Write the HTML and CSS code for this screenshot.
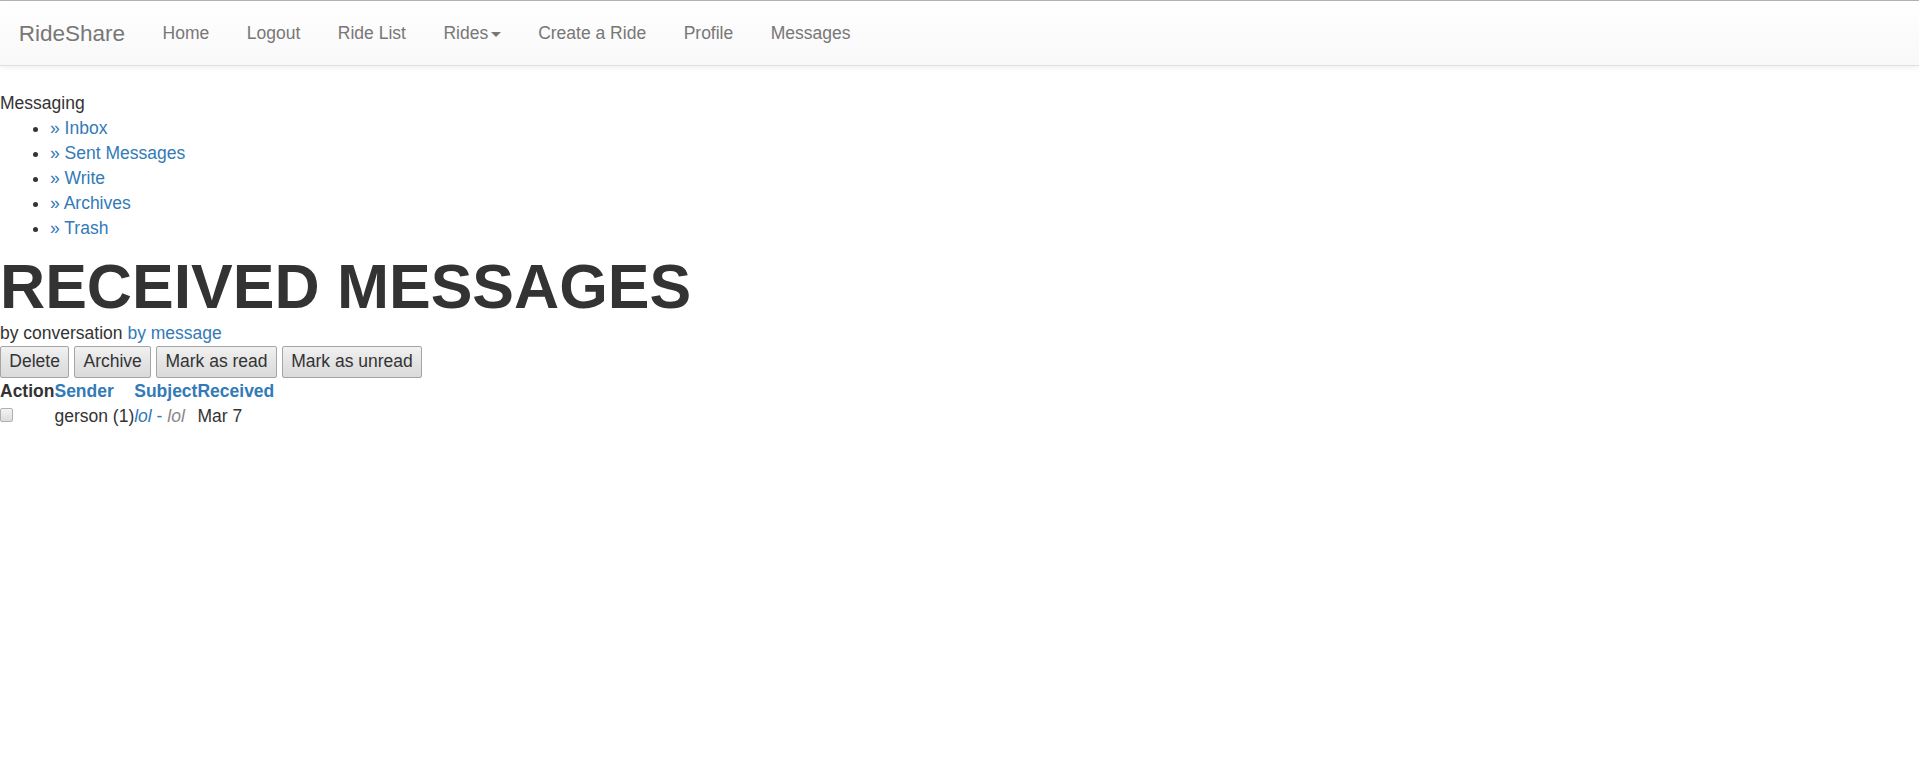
FILE: index.html
```
<!DOCTYPE html>
<html lang="en">
<head>
<meta charset="utf-8">
<title>RideShare - Messages</title>
<link rel="stylesheet" href="styles.css">
</head>
<body>
<div class="topline"></div>
<nav class="navbar">
  <a class="brand" href="#">RideShare</a>
  <ul class="nav">
    <li><a href="#">Home</a></li>
    <li><a href="#">Logout</a></li>
    <li><a href="#">Ride List</a></li>
    <li><a href="#">Rides<span class="caret"></span></a></li>
    <li><a href="#">Create a Ride</a></li>
    <li><a href="#">Profile</a></li>
    <li><a href="#">Messages</a></li>
  </ul>
</nav>
<main class="content">
  <div class="section-title">Messaging</div>
  <ul class="menu">
    <li><a href="#">» Inbox</a></li>
    <li><a href="#">» Sent Messages</a></li>
    <li><a href="#">» Write</a></li>
    <li><a href="#">» Archives</a></li>
    <li><a href="#">» Trash</a></li>
  </ul>
  <h1 class="title">Received Messages</h1>
  <div class="by">by conversation <a href="#">by message</a></div>
  <div class="actions">
    <button class="btn" type="button">Delete</button>
    <button class="btn" type="button">Archive</button>
    <button class="btn" type="button">Mark as read</button>
    <button class="btn" type="button">Mark as unread</button>
  </div>
  <table class="msgs">
    <thead>
      <tr>
        <th>Action</th>
        <th><a href="#">Sender</a></th>
        <th><a href="#">Subject</a></th>
        <th><a href="#">Received</a></th>
      </tr>
    </thead>
    <tbody>
      <tr>
        <td class="cb"><input type="checkbox" class="check"></td>
        <td>gerson (1)</td>
        <td><a href="#"><em>lol</em> - <em class="body">lol</em></a></td>
        <td>Mar 7</td>
      </tr>
    </tbody>
  </table>
</main>
</body>
</html>
```

FILE: styles.css
```
* { box-sizing: border-box; }
html, body { margin: 0; padding: 0; }
body {
  font-family: "Liberation Sans", Arial, Helvetica, sans-serif;
  font-size: 17.5px;
  line-height: 25px;
  color: #333;
  background: #fff;
}
a { color: #337ab7; text-decoration: none; }

.topline { height: 1px; background: #b5b5b5; }

.navbar {
  display: flex;
  align-items: flex-start;
  height: 65px;
  background: linear-gradient(to bottom, #ffffff 0, #f8f8f8 100%);
  border-bottom: 1px solid #e0e0e0;
  box-shadow: inset 0 1px 0 rgba(255,255,255,.15), 0 1px 6px rgba(0,0,0,.08);
  margin-bottom: 25px;
}
.brand {
  color: #777;
  font-size: 22.5px;
  line-height: 25px;
  padding: 19.75px 18.75px 17.75px;
}
.nav { display: flex; list-style: none; margin: 0; padding: 0; }
.nav a {
  display: block;
  color: #777;
  padding: 19.75px 18.75px 17.75px;
  line-height: 25px;
}
.caret {
  display: inline-block;
  width: 0; height: 0;
  margin-left: 2.5px;
  vertical-align: middle;
  border-top: 5px solid #777;
  border-left: 5px solid transparent;
  border-right: 5px solid transparent;
}

.content { padding: 0; }
.menu { margin: 0 0 11px; padding-left: 50px; }
.title {
  margin: 0;
  font-size: 62.5px;
  line-height: 68.75px;
  font-weight: 700;
  text-transform: uppercase;
  color: #333;
}
.actions { display: flex; gap: 5px; padding-bottom: 1px; }
.btn {
  font-family: inherit;
  font-size: 17.5px;
  line-height: 25px;
  color: #333;
  padding: 2.5px 8.3px;
  margin: 0;
  border: 1px solid #a5a5a5;
  border-radius: 2px;
  background: linear-gradient(to bottom, #f1f1f1 0, #e4e4e4 50%, #dadada 100%);
}
.msgs { border-collapse: collapse; border-spacing: 0; }
.msgs th, .msgs td { padding: 0; text-align: left; vertical-align: middle; }
.msgs th { font-weight: 700; }
.msgs td.cb { vertical-align: top; }
.check {
  appearance: none;
  -webkit-appearance: none;
  display: block;
  width: 13px; height: 14px;
  margin: 4.5px 0 0;
  border: 1px solid #b0b0b0;
  border-radius: 2px;
  background: linear-gradient(to bottom, #f4f4f4, #dcdcdc);
}
.msgs em.body { color: #888; }
```
